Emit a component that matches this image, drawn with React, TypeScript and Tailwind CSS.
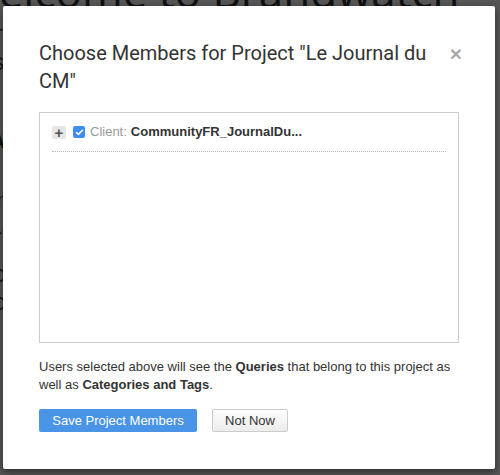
import { Check } from 'lucide-react';

export default function App() {
  return (
    <div className="relative h-[475px] w-[500px] overflow-hidden bg-white font-['Liberation_Sans',Arial,sans-serif]">
      {/* page behind the modal */}
      <div className="ml-[-42px] mt-[-31px] flex flex-col text-[#333]">
        <h1 className="whitespace-nowrap font-['Open_Sans',sans-serif] text-[44px] leading-[44px]">Welcome to Brandwatch</h1>
        <div className="mt-[14px] flex flex-col gap-[10px] pl-[34px] text-[18px] leading-[18px]">
          <p>The</p>
          <p>See</p>
          <p className="mt-[50px] font-bold">A</p>
          <p className="mt-[30px]">In</p>
          <p>La</p>
          <p className="mt-[20px]">Cr</p>
          <p>Ch</p>
        </div>
      </div>
      <div className="absolute inset-0 bg-black/[0.66]" />

      {/* modal */}
      <div className="absolute left-[3px] top-[6px] flex h-[463px] w-[492px] flex-col rounded-[2px] bg-white px-[36px] pt-[33px] shadow-[0_3px_9px_rgba(0,0,0,0.5)]">
        <div className="flex items-start">
          <h3 className="flex-1 pr-[10px] font-['Roboto',sans-serif] text-[20px] leading-[28px] text-[#333]">
            Choose Members for Project "Le Journal du CM"
          </h3>
          <button type="button" className="mr-[-3px] mt-[1px] font-['Liberation_Sans',sans-serif] text-[21px] font-bold leading-[28px] text-[#aaa]">
            ×
          </button>
        </div>

        <div className="mt-[17px] h-[231px] border border-[#ccc] px-[12px] pt-[11px]">
          <div className="flex items-center border-b border-dotted border-[#bbb] pb-[11px] text-[13px] leading-[16px]">
            <span className="flex h-[13px] w-[14px] items-center justify-center rounded-[2px] bg-[#e6e6e6] text-[15px] font-bold leading-none text-[#555]">
              +
            </span>
            <span className="ml-[7px] flex h-[12px] w-[12px] items-center justify-center rounded-[2px] bg-[#3d8ef0]">
              <Check className="h-[9px] w-[9px] text-white" strokeWidth={4} />
            </span>
            <span className="ml-[5px] text-[#999]">Client:</span>
            <span className="ml-[4px] font-bold text-[#333]">CommunityFR_JournalDu...</span>
          </div>
        </div>

        <p className="mt-[15px] text-[13px] leading-[18px] text-[#333]">
          Users selected above will see the <b>Queries</b> that belong to this project as well as{' '}
          <b>Categories and Tags</b>.
        </p>

        <div className="mt-[15px] flex gap-[15px] text-[13px]">
          <button type="button" className="h-[23px] w-[158px] rounded-[2px] bg-[#4a94e8] text-white">
            Save Project Members
          </button>
          <button type="button" className="h-[23px] w-[76px] rounded-[2px] border border-[#ccc] bg-gradient-to-b from-[#fdfdfd] to-[#ececec] text-[#333]">
            Not Now
          </button>
        </div>
      </div>
    </div>
  );
}
